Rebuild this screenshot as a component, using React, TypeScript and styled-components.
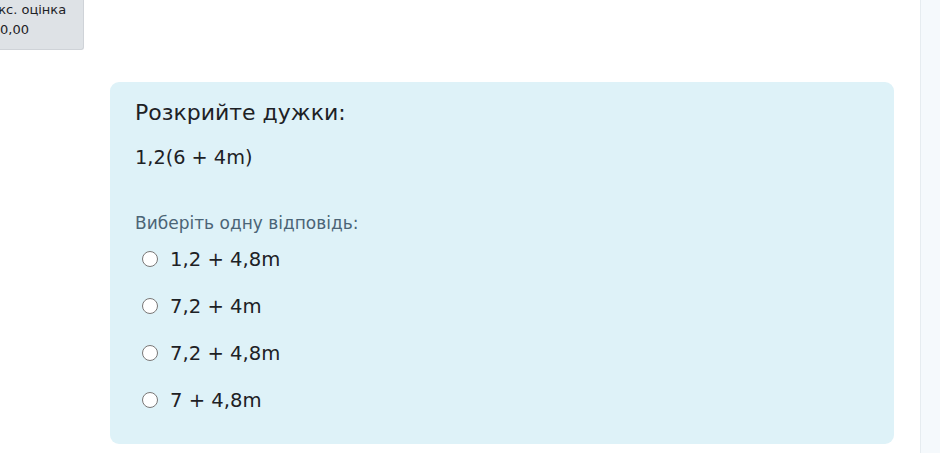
import styled, { createGlobalStyle } from "styled-components";

const GlobalStyle = createGlobalStyle`
  body {
    margin: 0;
    background: #ffffff;
    font-family: "DejaVu Sans", "Noto Sans", sans-serif;
    color: #1d2125;
  }
`;

const answers = ["1,2 + 4,8m", "7,2 + 4m", "7,2 + 4,8m", "7 + 4,8m"];

export default function App() {
  return (
    <>
      <GlobalStyle />
      <Page>
        <Main>
          <InfoBox>
            <InfoLine $shift={-21}>Макс. оцінка</InfoLine>
            <InfoLine $shift={0}>0,00</InfoLine>
          </InfoBox>
          <Card>
            <Title>Розкрийте дужки:</Title>
            <Expression>1,2(6 + 4m)</Expression>
            <Prompt>Виберіть одну відповідь:</Prompt>
            <Answers>
              {answers.map((a) => (
                <Answer key={a}>
                  <Radio type="radio" name="q1" />
                  <AnswerText>{a}</AnswerText>
                </Answer>
              ))}
            </Answers>
          </Card>
        </Main>
        <Drawer />
      </Page>
    </>
  );
}

const Page = styled.div`
  display: flex;
  width: 940px;
  height: 453px;
  overflow: hidden;
`;

const Main = styled.div`
  flex: 1;
  display: flex;
  flex-direction: column;
`;

const InfoBox = styled.div`
  width: 84px;
  height: 50px;
  box-sizing: border-box;
  background: #dee2e6;
  border-right: 1px solid #cfd3d8;
  border-bottom: 1px solid #cfd3d8;
  border-radius: 0 0 3px 0;
  overflow: hidden;
`;

const InfoLine = styled.div<{ $shift: number }>`
  margin-left: ${(p) => p.$shift}px;
  font-size: 13px;
  line-height: 20px;
  white-space: nowrap;
  color: #1d2125;
`;

const Card = styled.div`
  margin: 32px 26px 0 110px;
  height: 362px;
  box-sizing: border-box;
  padding: 14px 25px;
  background: #def2f8;
  border-radius: 9px;
`;

const Title = styled.div`
  font-size: 22px;
  line-height: 34px;
`;

const Expression = styled.div`
  margin-top: 13px;
  font-size: 19.3px;
  line-height: 30px;
`;

const Prompt = styled.div`
  margin-top: 39px;
  font-size: 17px;
  line-height: 22px;
  color: #4b6476;
`;

const Answers = styled.div`
  display: flex;
  flex-direction: column;
  gap: 15px;
  margin-top: 9px;
`;

const Answer = styled.label`
  display: flex;
  align-items: center;
  gap: 12px;
  height: 32px;
  padding-left: 7px;
`;

const Radio = styled.input`
  width: 16px;
  height: 16px;
  margin: 0;
`;

const AnswerText = styled.span`
  font-size: 19.6px;
`;

const Drawer = styled.div`
  width: 19px;
  flex-shrink: 0;
  background: #f5f9fc;
  border-left: 1px solid #e6ecf0;
`;
